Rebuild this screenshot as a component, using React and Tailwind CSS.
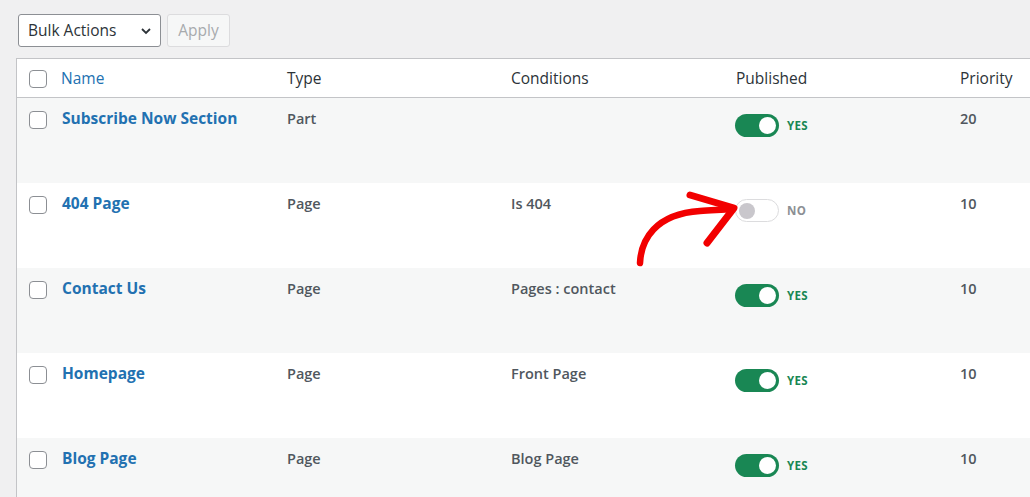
const rows = [
  { name: "Subscribe Now Section", type: "Part", cond: "", on: true, priority: "20" },
  { name: "404 Page", type: "Page", cond: "Is 404", on: false, priority: "10" },
  { name: "Contact Us", type: "Page", cond: "Pages : contact", on: true, priority: "10" },
  { name: "Homepage", type: "Page", cond: "Front Page", on: true, priority: "10" },
  { name: "Blog Page", type: "Page", cond: "Blog Page", on: true, priority: "10" },
];

const cols = "grid grid-cols-[34px_226px_224px_225px_224px_1fr]";

function Checkbox() {
  return <span className="block w-[18px] h-[18px] rounded-[4px] border border-[#8c8f94] bg-white" />;
}

function Toggle({ on }) {
  if (on) {
    return (
      <div className="flex items-center gap-[8px]">
        <span className="flex items-center justify-end w-[44px] h-[23px] rounded-full bg-[#198754] pr-[3px]">
          <span className="block w-[17px] h-[17px] rounded-full bg-white" />
        </span>
        <span className="text-[11.5px] font-bold text-[#198754] tracking-wide">YES</span>
      </div>
    );
  }
  return (
    <div className="flex items-center gap-[8px]">
      <span className="flex items-center w-[44px] h-[23px] rounded-full bg-white border border-[#dcdcde] pl-[3px]">
        <span className="block w-[16px] h-[16px] rounded-full bg-[#c9c7cc]" />
      </span>
      <span className="text-[11.5px] font-bold text-[#8c8f94] tracking-wide">NO</span>
    </div>
  );
}

export default function App() {
  return (
    <div
      className="w-[1030px] h-[497px] overflow-hidden bg-[#f0f0f1] relative"
      style={{ fontFamily: '"Open Sans", "Noto Sans", sans-serif' }}
    >
      {/* TOOLBAR */}
      <div className="flex gap-[6px] pt-[14px] pl-[18px]">
        <div className="flex items-center justify-between w-[143px] h-[33px] bg-white border border-[#8c8f94] rounded-[3px] pl-[9px] pr-[7px]">
          <span className="text-[15.5px] text-[#2c3338] pt-[1px]">Bulk Actions</span>
          <svg width="14" height="14" viewBox="0 0 14 14" fill="none" stroke="#2c3338" strokeWidth="1.8">
            <path d="M3 5l4 4 4-4" />
          </svg>
        </div>
        <div className="flex items-center justify-center w-[63px] h-[33px] bg-[#f6f7f7] border border-[#dcdcde] rounded-[3px]">
          <span className="text-[15.5px] text-[#a7aaad] pt-[1px]">Apply</span>
        </div>
      </div>

      {/* TABLE */}
      <div className="mt-[11px] ml-[16px] w-[1100px] border border-[#c3c4c7] bg-white">
        <div className={`${cols} h-[39px] items-center border-b border-[#c3c4c7] text-[15.5px] text-[#2c3338] pt-[1px]`}>
          <div className="pl-[12px]"><Checkbox /></div>
          <div className="pl-[10px] text-[#2271b1]">Name</div>
          <div className="pl-[10px]">Type</div>
          <div className="pl-[10px]">Conditions</div>
          <div className="pl-[10px]">Published</div>
          <div className="pl-[10px]">Priority</div>
        </div>

        {rows.map((r, i) => (
          <div
            key={r.name}
            className={`${cols} h-[85px] items-start ${i % 2 === 0 ? "bg-[#f6f7f7]" : "bg-white"}`}
          >
            <div className="pl-[12px] pt-[13px]"><Checkbox /></div>
            <div className="pl-[11px] pt-[9px] text-[15.5px] font-bold text-[#2271b1]">{r.name}</div>
            <div className="pl-[10px] pt-[10px] text-[14.5px] font-semibold text-[#50575e]">{r.type}</div>
            <div className="pl-[10px] pt-[10px] text-[14.5px] font-semibold text-[#50575e]">{r.cond}</div>
            <div className="pl-[9px] pt-[16px]"><Toggle on={r.on} /></div>
            <div className="pl-[10px] pt-[10px] text-[14.5px] font-semibold text-[#50575e]">{r.priority}</div>
          </div>
        ))}
      </div>

      {/* RED ARROW annotation */}
      <svg className="absolute left-0 top-0 pointer-events-none" width="1030" height="497" fill="none">
        <path
          d="M640 263 C641 240 655 214 700 211 C712 210 722 210 732 209"
          stroke="#f20000"
          strokeWidth="6.5"
          strokeLinecap="round"
        />
        <path
          d="M690 195 L734 208 L707 243"
          stroke="#f20000"
          strokeWidth="7"
          strokeLinecap="round"
          strokeLinejoin="round"
        />
      </svg>
    </div>
  );
}
